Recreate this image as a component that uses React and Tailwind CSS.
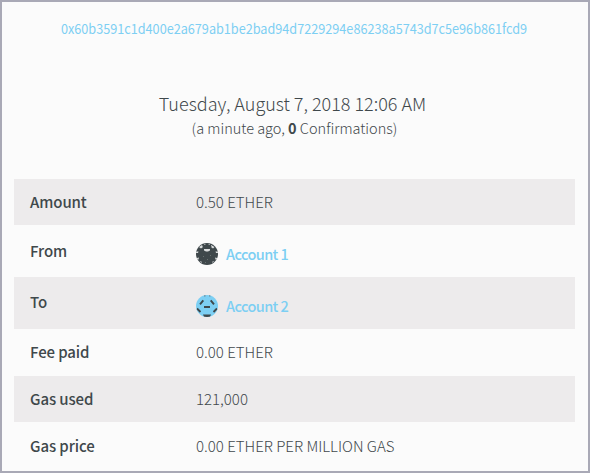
const rows = [
  { label: 'Amount', value: '0.50 ETHER', cls: 'h-[46px]', pad: 'pb-px' },
  { label: 'From', account: 'Account 1', cls: 'h-[52px]', pad: '' },
  { label: 'To', account: 'Account 2', cls: 'h-[52px]', pad: 'pb-0.5' },
  { label: 'Fee paid', value: '0.00 ETHER', cls: 'h-[47px]', pad: 'pb-px' },
  { label: 'Gas used', value: '121,000', cls: 'h-[46px]', pad: 'pb-px' },
  { label: 'Gas price', value: '0.00 ETHER PER MILLION GAS', cls: 'h-[47px]', pad: 'pt-px' },
];

function DarkAvatar() {
  return (
    <svg width="22" height="22" viewBox="0 0 22 22">
      <clipPath id="dark"><circle cx="11" cy="11" r="11" /></clipPath>
      <g clipPath="url(#dark)">
        <rect width="22" height="22" fill="#3f484b" />
        <path d="M3 4L6 2L7 4L5 5.500ZM15 2L18.500 4L17 5.500L15 4ZM8 6H14V7.500L12 8.500H10L8 7.500ZM0 8.500L2.500 8.500L2 10L0 10ZM19.500 8.500L22 8.500V10H20ZM1 15L3 14.500L2.500 16.500L1 17ZM19 14.500L21 15L21 17L19.500 16.500ZM3.500 18L5.500 18.500L6 20ZM16.500 18.500L18.500 18L16 20Z" fill="#dcdedf" />
        <path d="M8 1.500H9.500M12.500 1.500H14M6 3.500H7M15 3.500H16" stroke="#9aa0a2" />
        <path d="M7 13.500H8M11 16.500H12M14 12.500H15M9 19.500H10" stroke="#69716f" />
      </g>
    </svg>
  );
}

function BlueAvatar() {
  return (
    <svg width="22" height="22" viewBox="0 0 22 22">
      <clipPath id="blue"><circle cx="11" cy="11" r="11" /></clipPath>
      <g clipPath="url(#blue)">
        <rect width="22" height="22" fill="#7dcff3" />
        <path d="M4 9.300L7.300 5.300M14.700 5.300L18 9.300M8 12H14M1 13.500L4.500 17M21 13.500L17.500 17" stroke="#3f484b" strokeWidth="1.900" fill="none" />
        <path d="M7 19.500H15L14 22H8Z" fill="#3f484b" />
        <path d="M8 0H9.500V1.500H8ZM13 0H14.500V1.500H13Z" fill="#6a8796" />
      </g>
    </svg>
  );
}

export default function App() {
  return (
    <div className="h-[473px] w-[590px] overflow-hidden border-2 border-[#a9a9b6] bg-[#fbfbfb] px-3 font-['Noto_Sans_CJK_SC',sans-serif] text-[#3f484b]">
      <div className="mt-[15px] flex h-[22px] -translate-x-px scale-x-[0.904] items-center justify-center whitespace-nowrap text-[14px] font-normal text-[#7dcff3]">
        0x60b3591c1d400e2a679ab1be2bad94d7229294e86238a5743d7c5e96b861fcd9
      </div>
      <div className="mt-[51px] flex h-[26px] items-center justify-center whitespace-nowrap pr-[5px] text-[18px] font-light">
        Tuesday, August 7, 2018 12:06 AM
      </div>
      <div className="mt-px flex h-[22px] items-center justify-center whitespace-pre pr-px text-[14.5px] font-light">
        (a minute ago, <b className="font-bold">0</b> Confirmations)
      </div>
      <div className="mt-[40px] w-[561px]">
        {rows.map((r, i) => (
          <div key={r.label} className={`flex items-center pl-4 ${r.cls} ${i % 2 === 0 ? 'bg-[#edebec]' : ''}`}>
            <div className={`w-[166px] text-[15px] font-medium leading-6 tracking-[-0.1px] ${r.pad}`}>{r.label}</div>
            {r.account ? (
              <div className="flex items-center gap-2 pt-1.5 text-[14.5px] font-medium leading-6 tracking-[-0.6px] text-[#7dcff3]">
                {i === 1 ? <DarkAvatar /> : <BlueAvatar />}
                <span>{r.account}</span>
              </div>
            ) : (
              <div className={`whitespace-nowrap text-[15px] font-light leading-6 ${r.pad}`}>{r.value}</div>
            )}
          </div>
        ))}
      </div>
    </div>
  );
}
